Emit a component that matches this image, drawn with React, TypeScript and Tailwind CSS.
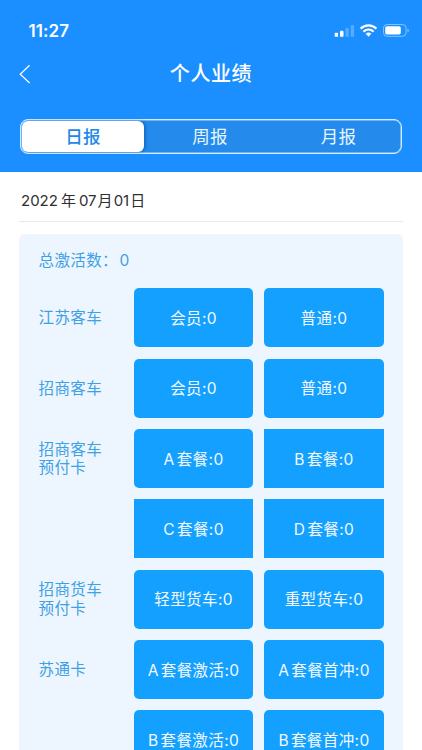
import React from 'react';

type Tile = { prefix?: string; label: string; square?: boolean };
type Group = { title: string[]; rows: [Tile, Tile][] };

const groups: Group[] = [
  { title: ['江苏客车'], rows: [[{ label: '会员' }, { label: '普通' }]] },
  { title: ['招商客车'], rows: [[{ label: '会员' }, { label: '普通' }]] },
  {
    title: ['招商客车', '预付卡'],
    rows: [
      [{ prefix: 'A', label: '套餐' }, { prefix: 'B', label: '套餐', square: true }],
      [{ prefix: 'C', label: '套餐', square: true }, { prefix: 'D', label: '套餐', square: true }],
    ],
  },
  { title: ['招商货车', '预付卡'], rows: [[{ label: '轻型货车' }, { label: '重型货车' }]] },
  {
    title: ['苏通卡'],
    rows: [
      [{ prefix: 'A', label: '套餐激活' }, { prefix: 'A', label: '套餐首冲' }],
      [{ prefix: 'B', label: '套餐激活' }, { prefix: 'B', label: '套餐首冲' }],
    ],
  },
];

function StatusIcons() {
  return (
    <svg width="76" height="16" viewBox="0 0 76 16" fill="none">
      <g fill="white">
        <rect x="0.7" y="9.7" width="3.4" height="4.1" rx="0.9" />
        <rect x="6" y="7.8" width="3.5" height="6" rx="0.9" />
        <rect x="11.4" y="5" width="3.4" height="8.8" rx="0.9" opacity="0.25" />
        <rect x="16.7" y="2" width="3.4" height="11.8" rx="0.9" opacity="0.25" />
      </g>
      <g stroke="white" strokeWidth="2.2">
        <path d="M26.6 5.6C31.2 1.2 37.8 1.2 42.4 5.6" />
        <path d="M29.4 8.7C32.4 5.8 36.6 5.8 39.6 8.7" />
      </g>
      <path d="M31.7 10.7C33.3 9.2 35.7 9.2 37.3 10.7L34.5 13.7Z" fill="white" />
      <rect x="49.5" y="1.5" width="22.6" height="11.8" rx="3.6" stroke="white" strokeOpacity="0.45" />
      <rect x="51.2" y="3.2" width="15.6" height="8.4" rx="1.8" fill="white" />
      <path d="M73.5 5.4V9.4C75.3 8.8 75.3 6 73.5 5.4Z" fill="white" fillOpacity="0.45" />
    </svg>
  );
}

function StatTile({ tile }: { tile: Tile }) {
  return (
    <div
      className={`flex h-[59.1px] w-[119.2px] items-center justify-center whitespace-nowrap bg-[#14a0ff] pt-[2px] text-[#f2faff] ${
        tile.square ? '' : 'rounded-[5px]'
      }`}
    >
      {tile.prefix && <span className="mr-[2px]">{tile.prefix}</span>}
      <span>{tile.label}:0</span>
    </div>
  );
}

export default function App() {
  return (
    <div className="h-[750px] w-[422px] overflow-hidden bg-white font-['Inter','Noto_Sans_CJK_SC',sans-serif]">
      <header className="h-[172px] bg-[#1b8fff] text-white">
        <div className="flex h-[60px] items-start justify-between pl-[28.5px] pr-[12px] pt-[23px]">
          <span className="text-[17px] font-semibold leading-[17px] tracking-[0.1px]">11:27</span>
          <StatusIcons />
        </div>
        <div className="flex h-[28px] items-center">
          <div className="w-[60px] pl-[19px]">
            <svg width="12" height="20" viewBox="0 0 12 20" fill="none">
              <path d="M10.6 1.2L1.2 10.2L10.6 19" stroke="white" strokeWidth="1.2" />
            </svg>
          </div>
          <h1 className="w-[302px] text-center text-[20px] font-medium leading-[29px] tracking-[0.6px]">个人业绩</h1>
        </div>
        <nav className="ml-[20px] mt-[31px] flex h-[34.5px] w-[382px] rounded-[8px] border border-[#d3edff] bg-[#248bec] p-px text-[17.5px] leading-[32px] tracking-[0.2px] shadow-[inset_0_0_0_0.5px_#b9e0ff]">
          <button className="w-[122px] rounded-[6px] bg-white font-medium leading-[31px] text-[#2289e8] shadow-[2px_0_3px_rgba(0,50,120,0.35)]">日报</button>
          <button className="w-[129px] pl-[3px] text-[#e9f6ff]">周报</button>
          <button className="w-[127px] pl-[4px] text-[#e9f6ff]">月报</button>
        </nav>
      </header>
      <main className="px-[19px]">
        <div className="flex h-[49.5px] items-center border-b border-[#e9e9e9] pl-[2px] pt-[10px] text-[15px] text-[#303030]">
          <span>2022</span>
          <span className="ml-[3px]">年</span>
          <span className="ml-[3px]">07</span>
          <span className="ml-[1px]">月</span>
          <span className="ml-[1px]">01</span>
          <span className="ml-[1px]">日</span>
        </div>
        <section className="mt-[12.5px] h-[530px] rounded-t-[5px] bg-[#edf6ff] px-[19.5px] text-[15.5px] tracking-[0.4px] text-[#3fa0e4]">
          <div className="flex h-[54.2px] items-start pt-[15px] leading-[24px]">
            总激活数：<span className="ml-[1.5px]">0</span>
          </div>
          <div className="flex flex-col gap-[11.25px]">
            {groups.map((group, index) => (
              <div key={index} className="flex">
                <div className="flex h-[59.1px] w-[95.5px] shrink-0 flex-col justify-center pt-[2px] leading-[18.8px]">
                  {group.title.map((line) => (
                    <span key={line}>{line}</span>
                  ))}
                </div>
                <div className="grid grid-cols-[119.2px_119.2px] gap-[11.25px]">
                  {group.rows.flat().map((tile, tileIndex) => (
                    <StatTile key={tileIndex} tile={tile} />
                  ))}
                </div>
              </div>
            ))}
          </div>
        </section>
      </main>
    </div>
  );
}
